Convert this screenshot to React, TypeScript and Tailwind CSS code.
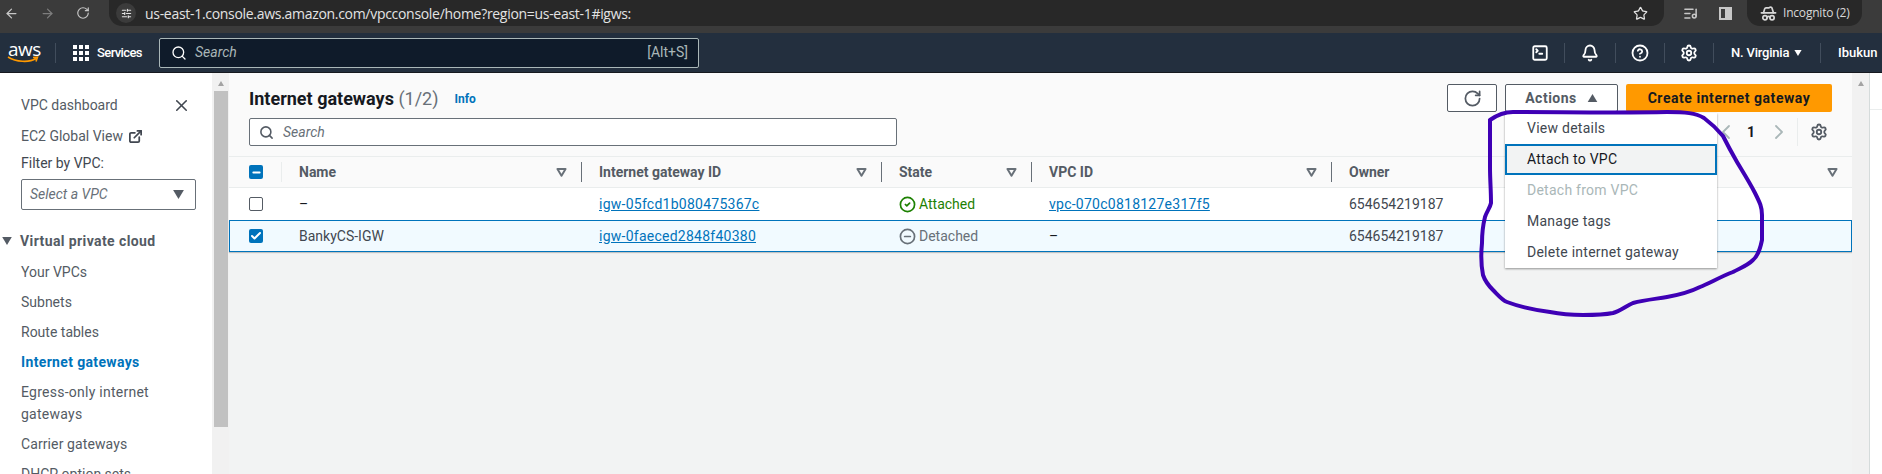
import { ArrowLeft, ArrowRight, ChevronLeft, ChevronRight, ExternalLink, RotateCw, Search, Settings, SlidersHorizontal, Star, X, Check, Minus, CircleCheck, CircleMinus, Bell, CircleHelp, SquareTerminal, ListMusic, HatGlasses } from 'lucide-react'

const NAV_ITEMS = ['Your VPCs', 'Subnets', 'Route tables']

function Triangle({ up = false, className = '' }: { up?: boolean; className?: string }) {
  return (
    <svg viewBox="0 0 12 10" className={className} aria-hidden="true">
      <path d={up ? 'M6 0 12 10H0Z' : 'M0 0H12L6 10Z'} fill="currentColor" />
    </svg>
  )
}

function SortIcon() {
  return (
    <svg viewBox="0 0 12 10" className="w-[11px] h-[9px] text-[#687078] shrink-0" aria-hidden="true">
      <path d="M1.5 1.2H10.5L6 8.5Z" fill="none" stroke="currentColor" strokeWidth="2.2" strokeLinejoin="round" />
    </svg>
  )
}

function HeaderCell({ label, last = false }: { label: string; last?: boolean }) {
  return (
    <div className="flex items-center h-[20px] pl-[17px] font-bold text-[#545b64]">
      <span className="flex-1">{label}</span>
      <span className="mr-[14px]">
        <SortIcon />
      </span>
      {!last && <span className="w-px h-[20px] bg-[#687078]" />}
    </div>
  )
}

function Divider() {
  return <span className="w-px h-[20px] bg-[#414d5c]" />
}

function TopNav() {
  return (
    <header className="h-[40px] shrink-0 bg-[#232f3e] border-b border-[#16191f] flex items-center text-white text-[13px] font-['Roboto',sans-serif]">
      <div className="w-[55px] shrink-0 pl-[8px] relative h-full">
        <span className="block text-[19px] leading-[20px] pt-[6px] tracking-[-0.5px] font-['Open_Sans',sans-serif]">aws</span>
        <svg viewBox="0 0 32 8" className="absolute left-[7px] top-[23px] w-[32px] h-[8px]" aria-hidden="true">
          <path d="M1 1C9 6 22 7 29 2.5M26 1.5 30.5 1.2 29 5.5" fill="none" stroke="#ff9900" strokeWidth="1.6" />
        </svg>
      </div>
      <Divider />
      <div className="grid grid-cols-3 gap-[2px] w-[16px] h-[16px] ml-[17px]">
        {Array.from({ length: 9 }).map((_, i) => (
          <span key={i} className="bg-white" />
        ))}
      </div>
      <span className="ml-[8px] w-[62px] font-medium tracking-[-0.6px]">Services</span>
      <div className="w-[540px] h-[30px] bg-[#0f1b2a] border border-[#aab7b8] rounded-[2px] flex items-center pl-[11px] pr-[10px]">
        <Search className="w-[16px] h-[16px]" strokeWidth={2} />
        <span className="ml-[8px] italic text-[14px] text-[#aab7b8] flex-1">Search</span>
        <span className="text-[#aab7b8] text-[14px]">[Alt+S]</span>
      </div>
      <div className="ml-auto flex items-center">
        <SquareTerminal className="w-[18px] h-[18px] mr-[15px]" strokeWidth={2.4} />
        <Divider />
        <Bell className="w-[18px] h-[18px] mx-[16px]" strokeWidth={2.4} />
        <Divider />
        <CircleHelp className="w-[18px] h-[18px] mx-[15px]" strokeWidth={2.4} />
        <Divider />
        <Settings className="w-[18px] h-[18px] mx-[15px]" strokeWidth={2.4} />
        <Divider />
        <span className="ml-[17px] font-medium w-[60px] whitespace-nowrap tracking-[-0.2px]">N. Virginia</span>
        <Triangle className="w-[8px] h-[6px] ml-[3px] mr-[18px]" />
        <Divider />
        <span className="ml-[17px] mr-[6px] w-[38px] font-medium">Ibukun</span>
      </div>
    </header>
  )
}

function BrowserBar() {
  return (
    <div className="h-[33px] shrink-0 bg-[#3b3b3b] font-['Open_Sans',sans-serif]">
      <div className="h-[26px] flex items-center">
        <ArrowLeft className="w-[15px] h-[15px] ml-[4px] text-[#c7c7c7]" strokeWidth={2} />
        <ArrowRight className="w-[15px] h-[15px] ml-[21px] text-[#7d7d7d]" strokeWidth={2} />
        <RotateCw className="w-[14px] h-[14px] ml-[21px] text-[#c7c7c7]" strokeWidth={2} />
        <div className="w-[1555px] h-[26px] ml-[19px] bg-[#282828] rounded-b-[13px] flex items-center pl-[7px] pr-[16px] text-[#e3e3e3]">
          <span className="w-[20px] h-[20px] rounded-full bg-[#3b3b3b] flex items-center justify-center">
            <SlidersHorizontal className="w-[11px] h-[11px]" strokeWidth={2.5} />
          </span>
          <span className="ml-[9px] text-[14px] tracking-[-0.3px] flex-1">us-east-1.console.aws.amazon.com/vpcconsole/home?region=us-east-1#igws:</span>
          <Star className="w-[15px] h-[15px]" strokeWidth={2} />
        </div>
        <ListMusic className="w-[15px] h-[15px] ml-[19px] text-[#c7c7c7]" strokeWidth={2.4} />
        <span className="w-[13px] h-[13px] ml-[21px] border-2 border-[#c7c7c7] flex justify-end">
          <span className="w-[5px] h-full bg-[#c7c7c7]" />
        </span>
        <div className="w-[115px] h-[26px] ml-[15px] bg-[#282828] rounded-b-[13px] flex items-center pl-[13px] text-[#d8d8d8] text-[12px]">
          <HatGlasses className="w-[17px] h-[17px] mr-[6px]" strokeWidth={2.4} />
          <span className="tracking-[-0.2px]">Incognito (2)</span>
        </div>
      </div>
    </div>
  )
}

function Sidebar() {
  return (
    <aside className="w-[212px] shrink-0 bg-white text-[14px] text-[#545b64] overflow-hidden">
      <div className="pl-[21px] pr-[21px] pt-[21px]">
        <div className="h-[22px] flex items-center justify-between">
          <span>VPC dashboard</span>
          <X className="w-[19px] h-[19px] text-[#414750]" strokeWidth={2} />
        </div>
        <div className="h-[22px] mt-[9px] flex items-center">
          <span>EC2 Global View</span>
          <ExternalLink className="w-[15px] h-[15px] ml-[5px] text-[#414750]" strokeWidth={2.8} />
        </div>
        <div className="h-[22px] mt-[5px] flex items-center text-[#414750]">Filter by VPC:</div>
        <div className="w-[175px] h-[31px] mt-[5px] border border-[#687078] rounded-[2px] flex items-center pl-[8px] pr-[11px] italic text-[#687078]">
          <span className="flex-1">Select a VPC</span>
          <Triangle className="w-[11px] h-[9px] text-[#545b64]" />
        </div>
      </div>
      <div className="h-[22px] mt-[20px] pl-[2px] flex items-center font-bold">
        <Triangle className="w-[10px] h-[8px]" />
        <span className="ml-[8px] tracking-[0.4px]">Virtual private cloud</span>
      </div>
      <ul className="pl-[21px] mt-[9px] flex flex-col gap-[8px]">
        {NAV_ITEMS.map((item) => (
          <li key={item} className="h-[22px] leading-[22px]">{item}</li>
        ))}
        <li className="h-[22px] leading-[22px] font-bold text-[#0073bb] tracking-[0.35px]">Internet gateways</li>
        <li className="leading-[22px] w-[170px] tracking-[0.25px]">Egress-only internet gateways</li>
        <li className="h-[22px] leading-[22px] tracking-[0.1px]">Carrier gateways</li>
        <li className="h-[22px] leading-[22px]">DHCP option sets</li>
      </ul>
    </aside>
  )
}

function Scrollbar({ thumb = false }: { thumb?: boolean }) {
  return (
    <div className="w-[17px] shrink-0 bg-[#f1f1f1] flex flex-col items-center">
      <Triangle up className="w-[8px] h-[5px] mt-[8px] text-[#a3a3a3]" />
      {thumb && <div className="w-[14px] h-[336px] mt-[5px] bg-[#c1c1c1]" />}
    </div>
  )
}

function Toolbar() {
  return (
    <div className="h-[83px] px-[20px] pt-[11px]">
      <div className="flex items-center h-[28px]">
        <h1 className="text-[18px] font-bold text-[#16191f]">
          Internet gateways <span className="font-normal text-[#687078]">(1/2)</span>
        </h1>
        <span className="ml-[16px] mt-[2px] text-[12px] font-bold text-[#0073bb]">Info</span>
        <div className="ml-auto flex gap-[8px]">
          <button className="w-[50px] h-[28px] bg-white border border-[#545b64] rounded-[2px] flex items-center justify-center">
            <RotateCw className="w-[19px] h-[19px] text-[#545b64]" strokeWidth={2.2} />
          </button>
          <div className="relative">
            <button className="w-[113px] h-[28px] bg-white border border-[#545b64] rounded-[2px] flex items-center justify-center gap-[10px] text-[14px] font-bold text-[#545b64] tracking-[0.5px]">
              Actions
              <Triangle up className="w-[11px] h-[8px]" />
            </button>
            <ul className="absolute z-10 left-0 top-[29px] w-[212px] h-[155px] bg-white shadow-[0_1px_2px_rgba(0,0,0,0.4)] text-[14px] text-[#414750] tracking-[0.25px]">
              <li className="h-[31px] pl-[22px] flex items-center">View details</li>
              <li className="h-[31px] pl-[20px] flex items-center bg-[#f2f3f3] border-2 border-[#0073bb] text-[#16191f]">Attach to VPC</li>
              <li className="h-[31px] pl-[22px] flex items-center text-[#aab7b8]">Detach from VPC</li>
              <li className="h-[31px] pl-[22px] flex items-center">Manage tags</li>
              <li className="h-[31px] pl-[22px] flex items-center">Delete internet gateway</li>
            </ul>
          </div>
          <button className="w-[206px] h-[28px] bg-[#ff9900] rounded-[2px] text-[14px] font-bold text-[#16191f] tracking-[0.55px]">
            Create internet gateway
          </button>
        </div>
      </div>
      <div className="flex items-center h-[28px] mt-[6px]">
        <div className="w-[648px] h-[28px] bg-white border border-[#687078] rounded-[2px] flex items-center pl-[9px]">
          <Search className="w-[15px] h-[15px] text-[#545b64]" strokeWidth={2.5} />
          <span className="ml-[9px] italic text-[14px] text-[#687078]">Search</span>
        </div>
        <div className="ml-auto flex items-center text-[#aab7b8]">
          <ChevronLeft className="w-[24px] h-[24px] mr-[9px]" strokeWidth={1.8} />
          <span className="w-[10px] text-[14px] font-bold text-[#16191f]">1</span>
          <ChevronRight className="w-[24px] h-[24px] ml-[10px]" strokeWidth={1.8} />
          <span className="w-px h-[28px] bg-[#eaeded] ml-[6px]" />
          <Settings className="w-[18px] h-[18px] ml-[12px] mr-[4px] text-[#545b64]" strokeWidth={2.4} />
        </div>
      </div>
    </div>
  )
}

const COLUMNS = 'grid grid-cols-[53px_300px_300px_150px_300px_520px] items-center'

function Table() {
  return (
    <div className="text-[14px] text-[#16191f]">
      <div className={`${COLUMNS} h-[32px] bg-[#fafafa] border-y border-[#eaeded]`}>
        <div className="flex items-center h-[20px] pl-[20px]">
          <span className="w-[14px] h-[14px] rounded-[2px] bg-[#0073bb] flex items-center justify-center">
            <Minus className="w-[11px] h-[11px] text-white" strokeWidth={4} />
          </span>
          <span className="ml-auto w-px h-[20px] bg-[#eaeded]" />
        </div>
        <HeaderCell label="Name" />
        <HeaderCell label="Internet gateway ID" />
        <HeaderCell label="State" />
        <HeaderCell label="VPC ID" />
        <HeaderCell label="Owner" last />
      </div>
      <div className={`${COLUMNS} h-[32px] bg-white`}>
        <div className="pl-[20px]">
          <span className="block w-[14px] h-[14px] rounded-[2px] bg-white border border-[#545b64]" />
        </div>
        <div className="pl-[17px]">–</div>
        <a className="pl-[17px] underline text-[#0073bb] tracking-[0.25px]">igw-05fcd1b080475367c</a>
        <div className="pl-[17px] flex items-center gap-[3px] text-[#1d8102]">
          <CircleCheck className="w-[17px] h-[17px]" strokeWidth={2.4} />
          Attached
        </div>
        <a className="pl-[17px] underline text-[#0073bb] tracking-[0.25px]">vpc-070c0818127e317f5</a>
        <div className="pl-[17px] text-[#414750]">654654219187</div>
      </div>
      <div className={`${COLUMNS} h-[32px] bg-[#f1faff] border border-[#0073bb] shadow-[0_1px_1px_rgba(0,0,0,0.2)]`}>
        <div className="pl-[19px]">
          <span className="w-[14px] h-[14px] rounded-[2px] bg-[#0073bb] flex items-center justify-center">
            <Check className="w-[12px] h-[12px] text-white" strokeWidth={4} />
          </span>
        </div>
        <div className="pl-[16px] text-[#414750]">BankyCS-IGW</div>
        <a className="pl-[16px] underline text-[#0073bb] tracking-[0.25px]">igw-0faeced2848f40380</a>
        <div className="pl-[16px] flex items-center gap-[3px] text-[#687078]">
          <CircleMinus className="w-[17px] h-[17px]" strokeWidth={2.4} />
          Detached
        </div>
        <div className="pl-[16px]">–</div>
        <div className="pl-[16px] text-[#414750]">654654219187</div>
      </div>
    </div>
  )
}

function Annotation() {
  return (
    <svg className="absolute inset-0 z-20 pointer-events-none" width="1882" height="474" aria-hidden="true">
      <path
        d="M1490 120C1497 115 1505 112 1513 112C1560 112 1620 113 1667 112C1685 112 1696 113 1704 118C1712 124 1718 130 1723 136C1728 146 1733 155 1737 162C1743 172 1750 183 1755 193C1760 203 1762 207 1762 215L1762 240C1760 250 1758 256 1753 260C1747 266 1740 268 1733 272C1720 277 1710 283 1700 287C1690 292 1678 295 1667 297C1655 299 1644 300 1633 303C1626 306 1620 311 1613 313C1603 315 1593 315 1583 315C1570 315 1560 314 1550 312C1535 310 1520 307 1507 302C1502 300 1498 295 1493 290C1488 285 1485 281 1483 275C1481 265 1481 253 1482 243C1482 232 1483 225 1485 217C1487 211 1490 208 1491 203C1491 190 1490 180 1490 167L1490 120"
        fill="none"
        stroke="#3f00b5"
        strokeWidth="4"
        strokeLinecap="round"
        strokeLinejoin="round"
      />
    </svg>
  )
}

export default function App() {
  return (
    <div className="relative w-[1882px] h-[474px] overflow-hidden flex flex-col bg-white font-['Roboto',sans-serif]">
      <BrowserBar />
      <TopNav />
      <div className="flex flex-1 min-h-0">
        <Sidebar />
        <Scrollbar thumb />
        <main className="w-[1623px] shrink-0 bg-[#f2f3f3]">
          <div className="bg-[#fafafa]">
            <Toolbar />
          </div>
          <Table />
        </main>
        <Scrollbar />
        <div className="flex-1 bg-white border-l border-[#d5dbdb]">
          <div className="h-[37px] border-b border-[#eaeded] pt-[13px] pl-[12px]">
            <span className="block w-[10px] h-[10px] rounded-full border border-[#545b64]" />
          </div>
          <span className="block w-[10px] h-[10px] mt-[13px] ml-[12px] border border-[#d5dbdb]" />
        </div>
      </div>
      <Annotation />
    </div>
  )
}
